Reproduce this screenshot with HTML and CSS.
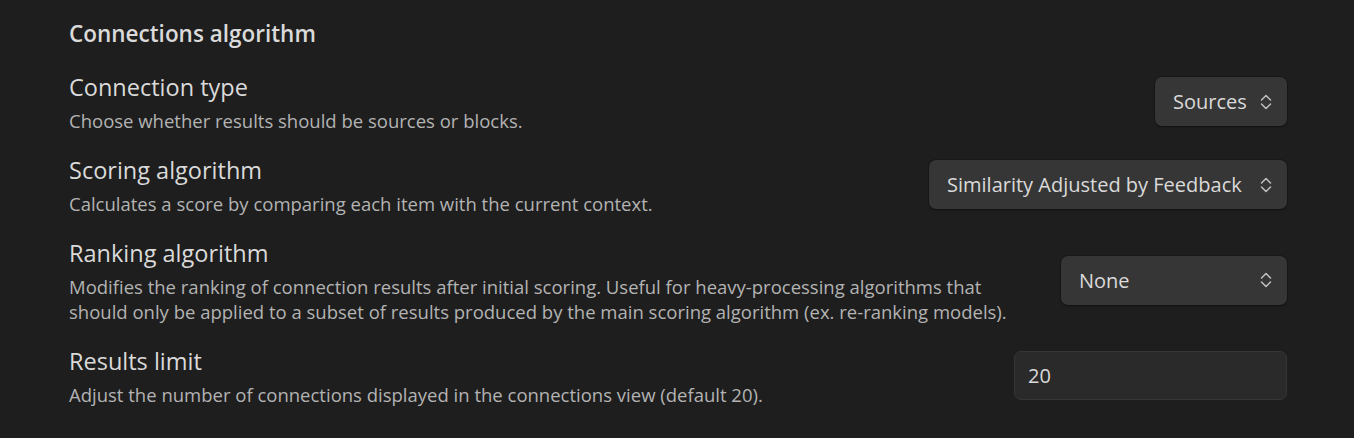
FILE: index.html
```html
<!DOCTYPE html>
<html>
<head>
<meta charset="utf-8">
<link rel="stylesheet" href="styles.css">
</head>
<body>
<div class="settings">
  <div class="heading">Connections algorithm</div>

  <div class="item">
    <div class="info">
      <div class="name">Connection type</div>
      <div class="desc">Choose whether results should be sources or blocks.</div>
    </div>
    <div class="control">
      <div class="dropdown w-sources"><span>Sources</span>
        <svg class="chev" viewBox="0 0 14 18" width="14" height="18"><path d="M2.5 7 L7 2.5 L11.5 7 M2.5 11 L7 15.5 L11.5 11" fill="none" stroke="currentColor" stroke-width="1.5" stroke-linecap="round" stroke-linejoin="round"/></svg>
      </div>
    </div>
  </div>

  <div class="item">
    <div class="info">
      <div class="name">Scoring algorithm</div>
      <div class="desc">Calculates a score by comparing each item with the current context.</div>
    </div>
    <div class="control">
      <div class="dropdown w-sim"><span>Similarity Adjusted by Feedback</span>
        <svg class="chev" viewBox="0 0 14 18" width="14" height="18"><path d="M2.5 7 L7 2.5 L11.5 7 M2.5 11 L7 15.5 L11.5 11" fill="none" stroke="currentColor" stroke-width="1.5" stroke-linecap="round" stroke-linejoin="round"/></svg>
      </div>
    </div>
  </div>

  <div class="item">
    <div class="info">
      <div class="name">Ranking algorithm</div>
      <div class="desc">Modifies the ranking of connection results after initial scoring. Useful for heavy-processing algorithms that should only be applied to a subset of results produced by the main scoring algorithm (ex. re-ranking models).</div>
    </div>
    <div class="control">
      <div class="dropdown w-none"><span>None</span>
        <svg class="chev" viewBox="0 0 14 18" width="14" height="18"><path d="M2.5 7 L7 2.5 L11.5 7 M2.5 11 L7 15.5 L11.5 11" fill="none" stroke="currentColor" stroke-width="1.5" stroke-linecap="round" stroke-linejoin="round"/></svg>
      </div>
    </div>
  </div>

  <div class="item">
    <div class="info">
      <div class="name">Results limit</div>
      <div class="desc">Adjust the number of connections displayed in the connections view (default 20).</div>
    </div>
    <div class="control">
      <div class="input">20</div>
    </div>
  </div>
</div>
</body>
</html>
```

FILE: styles.css
```css
html, body {
  margin: 0;
  padding: 0;
  background: #1e1e1e;
}
body {
  font-family: "Open Sans", "Noto Sans", sans-serif;
  color: #dadada;
}
.settings {
  padding: 18px 67px 0 69px;
}
.heading {
  font-size: 22.5px;
  font-weight: 600;
  line-height: 31px;
  color: #dadada;
  margin-bottom: 12px;
}
.item {
  display: flex;
  align-items: center;
  justify-content: space-between;
  padding: 11px 0;
  gap: 36px;
}
.info {
  flex: 1;
  min-width: 0;
}
.name {
  font-size: 23.5px;
  line-height: 30px;
  color: #dadada;
}
.desc {
  margin-top: 6px;
  font-size: 18.5px;
  line-height: 25px;
  color: #b3b3b3;
}
.control {
  flex: none;
  display: flex;
  margin-bottom: 2px;
}
.dropdown {
  box-sizing: border-box;
  height: 49px;
  display: flex;
  align-items: center;
  justify-content: space-between;
  padding: 0 14px 0 18px;
  background: #363636;
  border-radius: 7px;
  box-shadow: 0 1px 2px rgba(0,0,0,0.35), 0 0 0 1px rgba(0,0,0,0.15);
  font-size: 20px;
  color: #dadada;
}
.chev {
  color: #c0c0c0;
  margin-left: 10px;
}
.w-sources { width: 132px; }
.w-sim { width: 358px; }
.w-none { width: 226px; }
.input {
  box-sizing: border-box;
  width: 273px;
  height: 49px;
  display: flex;
  align-items: center;
  padding-left: 13px;
  background: #2a2a2a;
  border: 1px solid #363636;
  border-radius: 7px;
  font-size: 20px;
  color: #dadada;
}
```
